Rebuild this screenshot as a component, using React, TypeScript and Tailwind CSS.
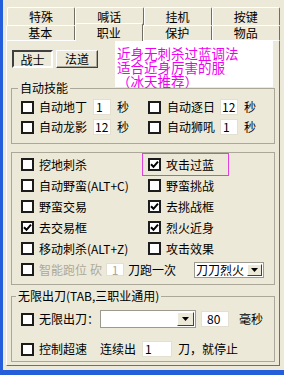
import React from "react";

function CheckBox({ checked }: { checked?: boolean }) {
  return (
    <span className="flex h-[13px] w-[13px] shrink-0 items-center justify-center border-2 border-[#1c1c1c] bg-white">
      {checked && (
        <svg width="9" height="9" viewBox="0 0 9 9">
          <path d="M1 4.2 L3.5 6.8 L8 1.6" fill="none" stroke="#000" strokeWidth="2" />
        </svg>
      )}
    </span>
  );
}

function Check({ label, checked }: { label: string; checked?: boolean }) {
  return (
    <div className="flex items-center">
      <CheckBox checked={checked} />
      <span className="ml-[5px] whitespace-nowrap">{label}</span>
    </div>
  );
}

function Field({ value, className }: { value: string; className: string }) {
  return (
    <span className={`flex shrink-0 items-center bg-white border border-[#E3E0D2] ${className}`}>
      {value}
    </span>
  );
}

function Arrow() {
  return (
    <svg width="7" height="4" viewBox="0 0 7 4">
      <polygon points="0,0 7,0 3.5,4" fill="#000" />
    </svg>
  );
}

function Combo({ text, className, btn }: { text: string; className: string; btn: string }) {
  return (
    <div className={`flex shrink-0 items-center justify-between bg-white border border-[#9C9A8F] pl-[1px] pr-[1px] ${className}`}>
      <span className="whitespace-nowrap">{text}</span>
      <span className={`flex items-center justify-center bg-[#ECE9D8] border border-t-white border-l-white border-b-[#404040] border-r-[#404040] ${btn}`}>
        <Arrow />
      </span>
    </div>
  );
}

function Tab({ label, active }: { label: string; active?: boolean }) {
  return (
    <div
      className={`flex items-center justify-center rounded-t-[2px] border-l border-t border-r border-l-white border-t-white border-r-[#716F64] bg-[#ECE9D8] ${
        active ? "relative z-10 -mt-[2px] -mb-[1px]" : ""
      }`}
    >
      {label}
    </div>
  );
}

export default function App() {
  return (
    <div className="flex h-[375px] w-[284px] flex-col border-l-[3px] border-b-[5px] border-[#245EDB] bg-[#ECE9D8] pl-[3px] pr-[4px] pt-[7px] text-[12px] leading-[14px] text-black font-['Noto_Sans_CJK_SC',sans-serif]">
      {/* tabs */}
      <div className="ml-[1px] grid h-[18px] grid-cols-4">
        <Tab label="特殊" />
        <Tab label="喊话" />
        <Tab label="挂机" />
        <Tab label="按键" />
      </div>
      <div className="grid h-[15px] grid-cols-4">
        <Tab label="基本" />
        <Tab label="职业" active />
        <Tab label="保护" />
        <Tab label="物品" />
      </div>

      {/* page */}
      <div className="flex h-[326px] flex-col border border-t-white border-l-white border-r-[#716F64] border-b-[#716F64]">
        <div className="flex h-[46px]">
          <div className="ml-[5px] mt-[9px] flex h-[18px] gap-[3px]">
            <div className="flex w-[41px] items-center justify-center border-2 border-t-[#404040] border-l-[#404040] border-b-white border-r-white pt-[1px]">
              战士
            </div>
            <div className="flex w-[42px] items-center justify-center border border-t-white border-l-white border-b-[#404040] border-r-[#404040] shadow-[inset_-1px_-1px_0_#ACA899]">
              法道
            </div>
          </div>
          <div className="ml-auto mr-[6px] w-[158px] bg-white pl-[2px] pt-[5px] text-[13.5px] leading-[14px] text-[#F000F0]">
            <div>近身无刺杀过蓝调法</div>
            <div>适合近身厉害的服</div>
            <div>（冰天推荐）</div>
          </div>
        </div>

        {/* 自动技能 */}
        <fieldset className="mx-[4px] -mt-[6px] border border-[#ACA899] pb-[6px] pl-[9px] pt-[2px]">
          <legend className="-ml-[3px] px-[2px]">自动技能</legend>
          <div className="flex h-[20px] items-center">
            <div className="flex w-[127px] items-center">
              <CheckBox />
              <span className="ml-[5px] w-[48px]">自动地丁</span>
              <Field value="1" className="ml-[6px] h-[16px] w-[18px] pl-[2px]" />
              <span className="ml-[6px]">秒</span>
            </div>
            <div className="flex items-center">
              <CheckBox />
              <span className="ml-[6px] w-[48px]">自动逐日</span>
              <Field value="12" className="ml-[5px] h-[16px] w-[18px] pl-[1px]" />
              <span className="ml-[6px]">秒</span>
            </div>
          </div>
          <div className="flex h-[20px] items-center">
            <div className="flex w-[127px] items-center">
              <CheckBox />
              <span className="ml-[5px] w-[48px]">自动龙影</span>
              <Field value="12" className="ml-[6px] h-[16px] w-[18px] pl-[1px]" />
              <span className="ml-[6px]">秒</span>
            </div>
            <div className="flex items-center">
              <CheckBox />
              <span className="ml-[6px] w-[48px]">自动狮吼</span>
              <Field value="1" className="ml-[5px] h-[16px] w-[18px] pl-[2px]" />
              <span className="ml-[6px]">秒</span>
            </div>
          </div>
        </fieldset>

        {/* options */}
        <fieldset className="mx-[4px] mt-[8px] border border-[#ACA899] pb-[4px] pl-[9px] pt-[1px]">
          <div className="flex h-[21px] items-center">
            <div className="w-[127px]">
              <Check label="挖地刺杀" />
            </div>
            <div className="-ml-[6px] flex h-[23px] w-[87px] items-center border border-[#E040E0] pl-[5px]">
              <CheckBox checked />
              <span className="ml-[5px]">攻击过蓝</span>
            </div>
          </div>
          <div className="flex h-[21px] items-center">
            <div className="w-[127px]">
              <Check label="自动野蛮(ALT+C)" />
            </div>
            <Check label="野蛮挑战" />
          </div>
          <div className="flex h-[21px] items-center">
            <div className="w-[127px]">
              <Check label="野蛮交易" />
            </div>
            <Check label="去挑战框" checked />
          </div>
          <div className="flex h-[21px] items-center">
            <div className="w-[127px]">
              <Check label="去交易框" checked />
            </div>
            <Check label="烈火近身" checked />
          </div>
          <div className="flex h-[21px] items-center">
            <div className="w-[127px]">
              <Check label="移动刺杀(ALT+Z)" />
            </div>
            <Check label="攻击效果" />
          </div>
          <div className="flex h-[21px] items-center">
            <CheckBox />
            <span className="ml-[5px] text-[#ACA899]">智能跑位</span>
            <span className="ml-[3px] text-[#ACA899]">砍</span>
            <Field value="1" className="ml-[4px] h-[13px] w-[18px] justify-center border-[#ACA899] text-[#ACA899]" />
            <span className="ml-[4px]">刀跑一次</span>
            <Combo text="刀刀烈火" className="ml-[18px] h-[16px] w-[70px]" btn="h-[12px] w-[15px]" />
          </div>
        </fieldset>

        {/* 无限出刀 */}
        <fieldset className="mx-[4px] mt-[4px] border border-[#ACA899] pb-[2px] pl-[9px] pt-[6px]">
          <legend className="-ml-[5px] px-[2px]">无限出刀(TAB,三职业通用)</legend>
          <div className="flex h-[20px] items-center">
            <CheckBox />
            <span className="ml-[5px] w-[61px]">无限出刀：</span>
            <Combo text="" className="h-[18px] w-[96px]" btn="h-[14px] w-[17px]" />
            <Field value="80" className="ml-[5px] h-[16px] w-[28px] pl-[5px]" />
            <span className="ml-[10px]">毫秒</span>
          </div>
          <div className="mt-[10px] flex h-[20px] items-center">
            <CheckBox />
            <span className="ml-[5px]">控制超速</span>
            <span className="ml-[13px]">连续出</span>
            <Field value="1" className="ml-[6px] h-[16px] w-[30px] pl-[2px]" />
            <span className="ml-[6px]">刀，就停止</span>
          </div>
        </fieldset>
      </div>
    </div>
  );
}
